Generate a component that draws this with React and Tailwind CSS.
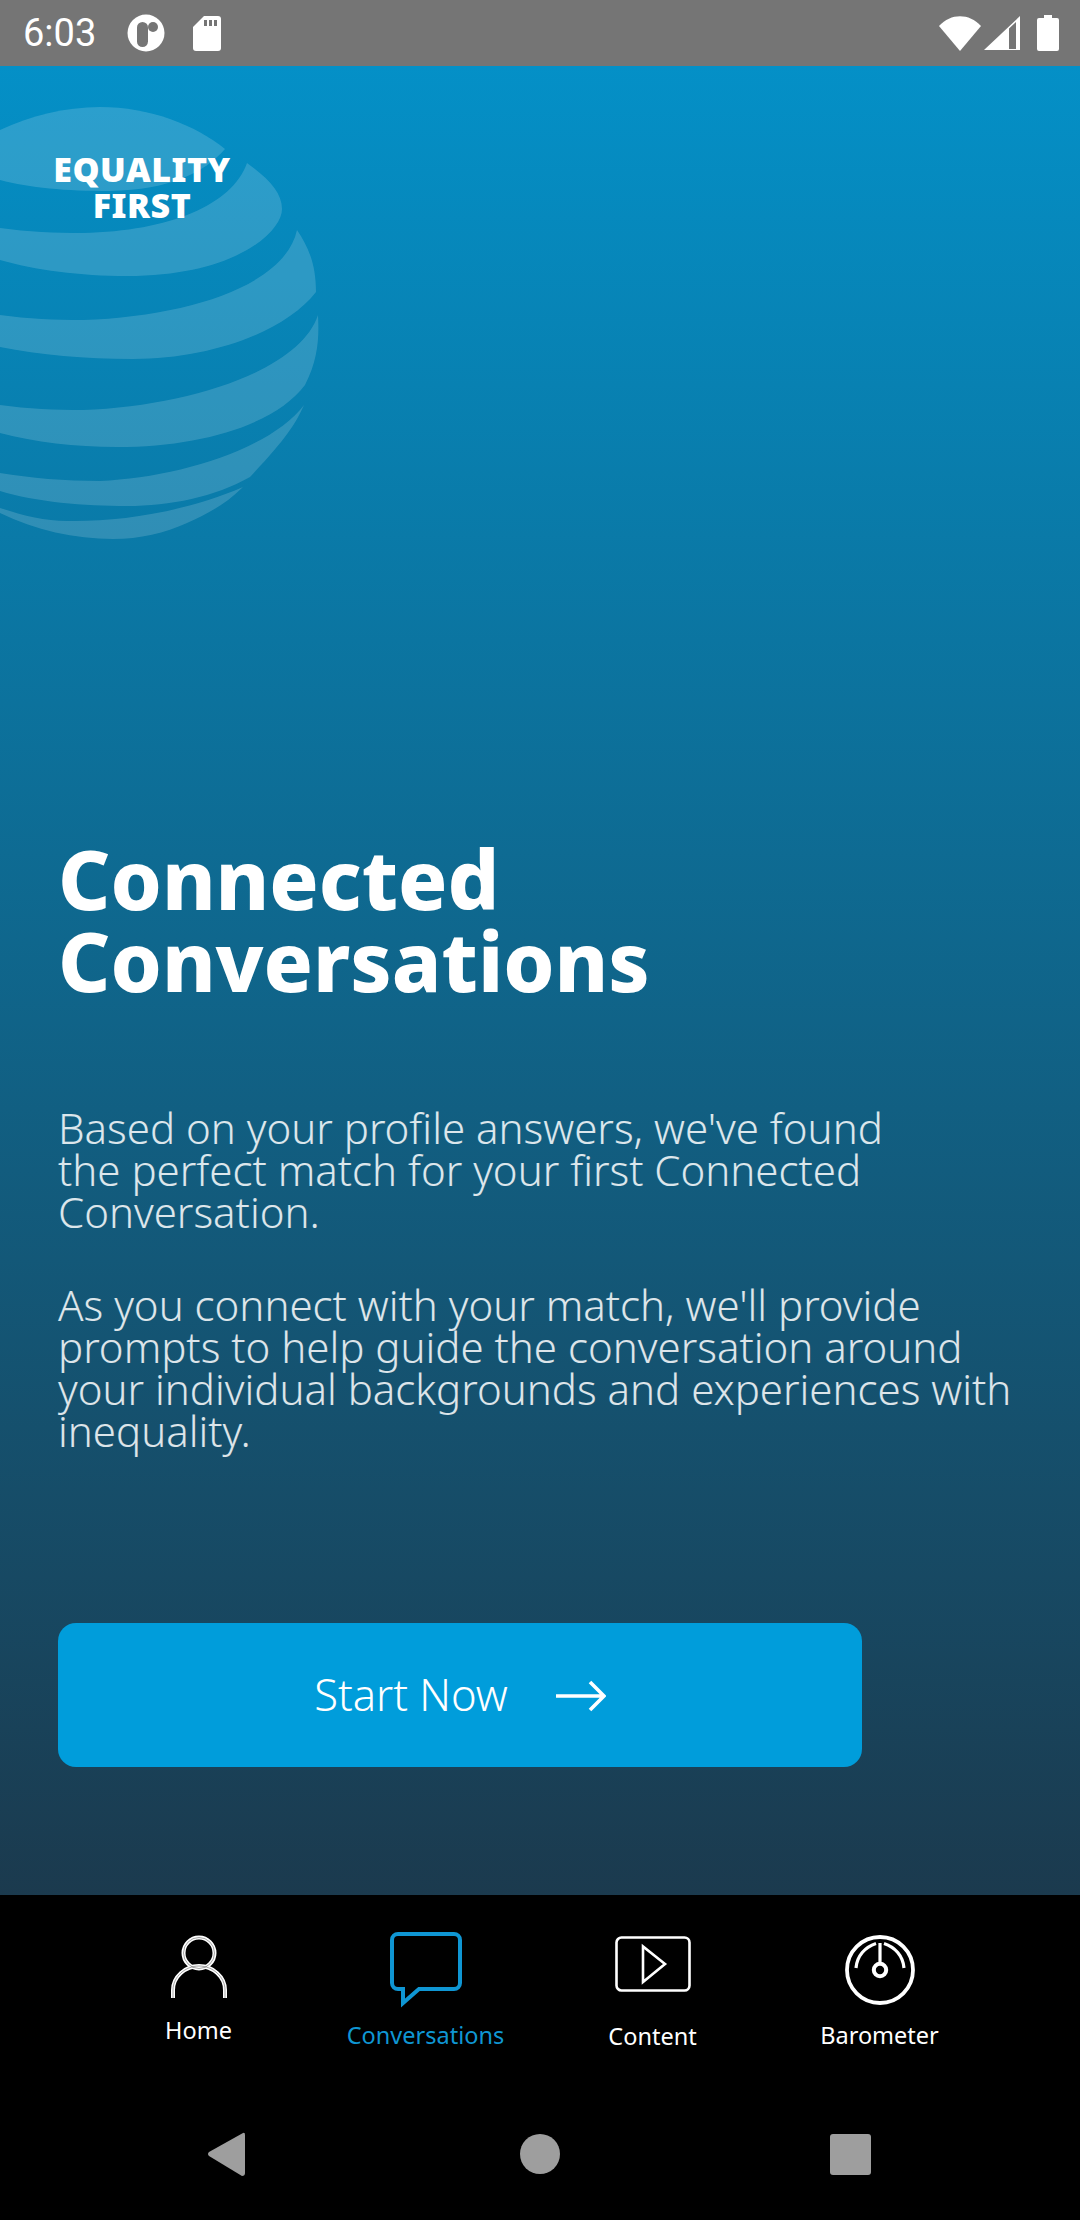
import React from "react";

function Globe() {
  const d = [
    "M0 130 C30 116 65 107 100 107 C150 107 195 125 225 149 C205 172 170 190 110 191 C65 191 30 188 0 180 Z",
    "M247 163 C268 178 282 192 282 209 C282 232 235 276 127 276 C80 276 35 270 0 260 L0 228 C28 232 55 233 83 233 C170 231 232 205 247 163 Z",
    "M297 230 C309 248 316 265 316 292 C285 332 210 359 133 359 C85 359 40 355 0 347 L0 315 C28 319 55 320 83 320 C190 316 285 285 297 230 Z",
    "M318 315 C319 335 319 358 305 385 C275 425 200 447 117 447 C75 447 35 442 0 433 L0 405 C28 409 55 410 83 410 C190 406 300 370 318 315 Z",
    "M304 405 C295 425 285 440 250 477 C215 497 170 506 127 506 C85 506 35 502 0 491 L0 473 C30 478 65 481 100 481 C175 478 270 450 304 405 Z",
    "M243 487 C225 505 205 515 187 523 C165 533 140 539 113 539 C75 539 35 530 0 513 L0 508 C25 516 45 521 67 521 C120 522 185 512 243 487 Z",
  ];
  return (
    <svg className="absolute left-0 top-0" width="330" height="560" viewBox="0 0 330 560" fill="#ffffff" fillOpacity="0.155">
      {d.map((p, i) => (
        <path key={i} d={p} />
      ))}
    </svg>
  );
}

function StatusBar() {
  return (
    <div className="h-[66px] bg-[#757575] flex items-center pl-[23px] pr-[21px] text-white shrink-0">
      <span className="text-[38px] leading-none font-['Roboto',sans-serif] w-[104px]">6:03</span>
      <svg width="38" height="38" viewBox="0 0 38 38">
        <circle cx="19" cy="19" r="18.5" fill="#fff" />
        <rect x="10" y="8" width="11" height="25" rx="5.5" fill="#757575" />
        <circle cx="26" cy="13" r="5" fill="#757575" />
      </svg>
      <svg width="28" height="35" viewBox="0 0 28 35" className="ml-[28px]">
        <path d="M11 0 H25 a3 3 0 0 1 3 3 V32 a3 3 0 0 1 -3 3 H3 a3 3 0 0 1 -3 -3 V11 Z" fill="#fff" />
        <rect x="11" y="4" width="3" height="6" fill="#757575" />
        <rect x="16" y="4" width="3" height="6" fill="#757575" />
        <rect x="21" y="4" width="3" height="6" fill="#757575" />
      </svg>
      <div className="flex-1" />
      <svg width="42" height="35" viewBox="0 0 42 35">
        <path d="M0 10 C12 -3 30 -3 42 10 L21 35 Z" fill="#fff" />
      </svg>
      <svg width="36" height="34" viewBox="0 0 36 34" className="ml-[3px]">
        <path d="M36 0 V34 H0 Z" fill="#fff" />
        <path d="M25 12.5 V33 H32 V6 Z" fill="#757575" />
      </svg>
      <svg width="22" height="36" viewBox="0 0 22 36" className="ml-[17px]">
        <path d="M7 0 H15 V3 H20 a2 2 0 0 1 2 2 V34 a2 2 0 0 1 -2 2 H2 a2 2 0 0 1 -2 -2 V5 a2 2 0 0 1 2 -2 H7 Z" fill="#fff" />
      </svg>
    </div>
  );
}

function NavItem({ icon, label, color, labelClass }) {
  return (
    <div className={`flex flex-col items-center ${color}`}>
      <div className="h-[84px] flex items-center justify-center">{icon}</div>
      <span className={`text-[23.5px] leading-[30px] font-['Noto_Sans',sans-serif] font-normal ${labelClass}`}>{label}</span>
    </div>
  );
}

const HomeIcon = (
  <svg width="56" height="66" viewBox="0 0 56 66" className="mt-[12px]">
    <g fill="none" stroke="#fff" strokeWidth="4">
      <circle cx="28" cy="19" r="15.5" />
      <path d="M2 64 V56 C2 43 14 32 28 32 C42 32 54 43 54 56 V64" />
    </g>
    <g fill="none" stroke="#000" strokeWidth="0.6" strokeOpacity="0.6">
      <circle cx="28" cy="19" r="15.5" />
      <path d="M2 64 V56 C2 43 14 32 28 32 C42 32 54 43 54 56 V64" />
    </g>
  </svg>
);

const ChatIcon = (
  <svg width="72" height="76" viewBox="0 0 72 76" className="mt-[18px]">
    <path d="M8 2 H64 a6 6 0 0 1 6 6 V51 a6 6 0 0 1 -6 6 H29 L13 71 V57 H8 a6 6 0 0 1 -6 -6 V8 a6 6 0 0 1 6 -6 Z" fill="none" stroke="#0f96d3" strokeWidth="4" />
  </svg>
);

const PlayIcon = (
  <svg width="76" height="56" viewBox="0 0 76 56" className="mt-[6px]">
    <rect x="1.5" y="1.5" width="73" height="53" rx="5" fill="none" stroke="#fff" strokeWidth="2.6" />
    <path d="M28 10.5 V46 L50 28 Z" fill="none" stroke="#fff" strokeWidth="2.6" />
  </svg>
);

const GaugeIcon = (
  <svg width="70" height="70" viewBox="0 0 70 70" className="mt-[18px]">
    <g fill="none" stroke="#fff">
      <circle cx="35" cy="35" r="33" strokeWidth="3.8" />
      <path d="M11 33 C12 21 20 12 31 8.5" strokeWidth="3.2" />
      <path d="M59 33 C58 21 50 12 39 8.5" strokeWidth="3.2" />
      <path d="M35 8 V27" strokeWidth="3.2" />
      <circle cx="35" cy="35" r="6.2" strokeWidth="4" />
    </g>
  </svg>
);

export default function App() {
  return (
    <div className="w-[1080px] h-[2220px] flex flex-col overflow-hidden bg-black">
      <StatusBar />
      <main className="relative h-[1829px] shrink-0 bg-linear-to-b/srgb from-[#0490c7] to-[#1b3a4e] px-[58px] pt-[772px] font-['Noto_Sans',sans-serif] overflow-hidden">
        <div className="absolute left-0 top-[-66px]"><Globe /></div>
        <div className="absolute left-[42px] top-[85px] w-[200px] text-center text-white text-[34px] leading-[36px] font-black tracking-[0.5px]">
          EQUALITY<br />FIRST
        </div>
        <h1 className="relative text-white text-[81.5px] leading-[82px] font-extrabold">
          Connected<br />Conversations
        </h1>
        <div className="relative mt-[105px] text-white/85 text-[42px] leading-[42px] font-light">
          <p>Based on your profile answers, we've found<br />the perfect match for your first Connected<br />Conversation.</p>
          <p className="mt-[51px]">As you connect with your match, we'll provide<br />prompts to help guide the conversation around<br />your individual backgrounds and experiences with<br />inequality.</p>
        </div>
        <button className="relative mt-[171px] flex h-[144px] w-[804px] items-center justify-center gap-[48px] rounded-[18px] bg-[#009ddb] text-white text-[43.5px] font-light">
          <span>Start Now</span>
          <svg width="50" height="32" viewBox="0 0 50 32" className="mt-[2px]">
            <path d="M0 16 H47 M34 2 L48 16 L34 30" fill="none" stroke="#fff" strokeWidth="3.6" />
          </svg>
        </button>
      </main>
      <nav className="grid grid-cols-4 w-[908px] ml-[85px] pt-[24px] text-white">
        <NavItem icon={HomeIcon} label="Home" color="text-white" labelClass="mt-[12px]" />
        <NavItem icon={ChatIcon} label="Conversations" color="text-[#0f96d3]" labelClass="mt-[17px]" />
        <NavItem icon={PlayIcon} label="Content" color="text-white" labelClass="mt-[18px]" />
        <NavItem icon={GaugeIcon} label="Barometer" color="text-white" labelClass="mt-[17px]" />
      </nav>
      <div className="flex-1 relative">
        <div className="absolute inset-x-0 top-[81px] flex items-start pl-[207px]">
          <svg width="38" height="44" viewBox="0 0 38 44">
            <path d="M36 1 L2 20 Q0 22 2 24 L35 44 Q38 44 38 41 V3 Q38 0 36 1 Z" fill="#9e9e9e" />
          </svg>
          <div className="ml-[275px] mt-[2px] h-[40px] w-[40px] rounded-full bg-[#9e9e9e]" />
          <div className="ml-[270px] mt-[2px] h-[41px] w-[41px] rounded-[3px] bg-[#9e9e9e]" />
        </div>
      </div>
    </div>
  );
}
